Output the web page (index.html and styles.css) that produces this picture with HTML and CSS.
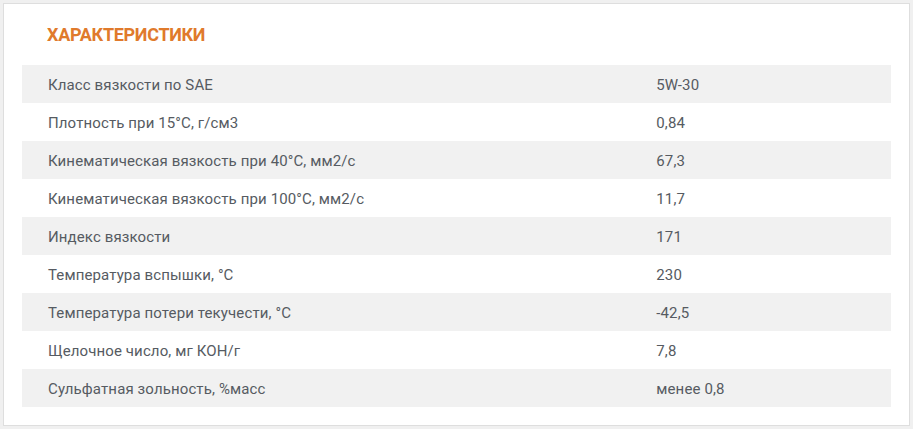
FILE: index.html
```html
<!DOCTYPE html>
<html lang="ru">
<head>
<meta charset="utf-8">
<link rel="stylesheet" href="styles.css">
</head>
<body>
<div class="card">
  <h2 class="title">ХАРАКТЕРИСТИКИ</h2>
  <table class="specs">
    <tr><td class="name">Класс вязкости по SAE</td><td class="val">5W-30</td></tr>
    <tr><td class="name">Плотность при 15°С, г/см3</td><td class="val">0,84</td></tr>
    <tr><td class="name">Кинематическая вязкость при 40°С, мм2/с</td><td class="val">67,3</td></tr>
    <tr><td class="name">Кинематическая вязкость при 100°С, мм2/с</td><td class="val">11,7</td></tr>
    <tr><td class="name">Индекс вязкости</td><td class="val">171</td></tr>
    <tr><td class="name">Температура вспышки, °С</td><td class="val">230</td></tr>
    <tr><td class="name">Температура потери текучести, °С</td><td class="val">-42,5</td></tr>
    <tr><td class="name">Щелочное число, мг КОН/г</td><td class="val">7,8</td></tr>
    <tr><td class="name">Сульфатная зольность, %масс</td><td class="val">менее 0,8</td></tr>
  </table>
</div>
</body>
</html>
```
FILE: styles.css
```css
html, body {
  margin: 0;
  padding: 0;
  background: #f0f0f0;
}
body {
  padding: 3px 3px 0 3px;
  font-family: Roboto, "Noto Sans", sans-serif;
}
.card {
  width: 907px;
  height: 423px;
  box-sizing: border-box;
  background: #fff;
  border: 1px solid #dedede;
  padding: 0 18px;
}
.title {
  margin: 0;
  padding: 20px 0 0 25px;
  height: 40px;
  box-sizing: border-box;
  font-size: 18px;
  line-height: 22px;
  font-weight: 700;
  color: #e07a2c;
  letter-spacing: -0.3px;
}
.specs {
  width: 869px;
  border-collapse: collapse;
  margin-top: 21px;
}
.specs tr:nth-child(odd) {
  background: #f1f1f1;
}
.specs td {
  height: 38px;
  box-sizing: border-box;
  padding: 2px 0 0 26px;
  font-size: 15px;
  letter-spacing: 0.12px;
  color: #565b62;
  vertical-align: middle;
}
.specs td.name {
  width: 70%;
}
```
